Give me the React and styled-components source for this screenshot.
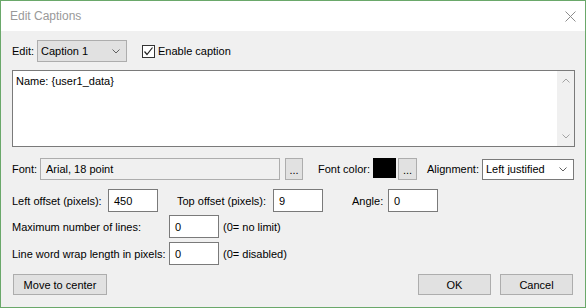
import React from 'react';
import styled, { createGlobalStyle } from 'styled-components';

const GlobalStyle = createGlobalStyle`
  html, body {
    margin: 0;
    padding: 0;
    background: #ffffff;
  }
  body {
    font-family: "Liberation Sans", Arial, sans-serif;
    font-size: 11px;
    color: #000000;
  }
`;

const SWindow = styled.div`
  box-sizing: border-box;
  width: 586px;
  height: 308px;
  border: 1px solid #6aa86a;
  background: #f0f0f0;
  display: flex;
  flex-direction: column;
`;

const STitleBar = styled.div`
  height: 30px;
  background: #ffffff;
  display: flex;
  align-items: center;
  justify-content: space-between;
  padding: 0 9px 0 9px;
  flex-shrink: 0;
`;

const STitle = styled.span`
  font-size: 12px;
  color: #999999;
  margin-top: -1px;
`;

const SBody = styled.div`
  flex: 1;
  display: flex;
  flex-direction: column;
  padding: 9px 10px 0 11px;
`;

const SRow = styled.div`
  display: flex;
  align-items: center;
  height: ${props => props.$h || 22}px;
  margin-top: ${props => props.$mt || 0}px;
`;

const SLabel = styled.span`
  display: inline-block;
  white-space: nowrap;
  width: ${props => (props.$w ? `${props.$w}px` : 'auto')};
  margin-left: ${props => props.$ml || 0}px;
  flex-shrink: 0;
`;

const SCombo = styled.div`
  box-sizing: border-box;
  width: ${props => props.$w}px;
  height: ${props => props.$h || 22}px;
  border: 1px solid ${props => (props.$light ? '#7a7a7a' : '#adadad')};
  background: ${props => (props.$light ? '#ffffff' : '#e1e1e1')};
  display: flex;
  align-items: center;
  justify-content: space-between;
  padding: 0 6px 0 3px;
  margin-left: ${props => props.$ml || 0}px;
  flex-shrink: 0;
`;

const SCheckWrap = styled.label`
  display: flex;
  align-items: center;
  margin-left: 15px;
  gap: 3px;
`;

const SCheckBox = styled.span`
  box-sizing: border-box;
  width: 13px;
  height: 13px;
  border: 1px solid #333333;
  background: #ffffff;
  display: flex;
  align-items: center;
  justify-content: center;
`;

const STextArea = styled.div`
  box-sizing: border-box;
  height: 77px;
  margin-top: 8px;
  border: 1px solid #7a7a7a;
  background: #ffffff;
  display: flex;
`;

const STextContent = styled.div`
  flex: 1;
  padding: 4px 3px;
`;

const SScrollBar = styled.div`
  width: 17px;
  background: #f0f0f0;
  display: flex;
  flex-direction: column;
  justify-content: space-between;
  align-items: center;
  padding: 7px 0;
`;

const SReadonlyBox = styled.div`
  box-sizing: border-box;
  width: 240px;
  height: 22px;
  border: 1px solid #adadad;
  background: #f0f0f0;
  display: flex;
  align-items: center;
  padding-left: 5px;
  flex-shrink: 0;
`;

const SSmallButton = styled.div`
  box-sizing: border-box;
  width: ${props => props.$w || 18}px;
  height: 22px;
  margin-left: ${props => props.$ml || 0}px;
  border: 1px solid #adadad;
  background: #e1e1e1;
  display: flex;
  align-items: flex-end;
  justify-content: center;
  padding-bottom: 3px;
  line-height: 1;
  flex-shrink: 0;
`;

const SSwatch = styled.div`
  width: 23px;
  height: 20px;
  background: #000000;
  align-self: flex-start;
  flex-shrink: 0;
`;

const SInput = styled.div`
  box-sizing: border-box;
  width: 50px;
  height: 23px;
  border: 1px solid #7a7a7a;
  background: #ffffff;
  display: flex;
  align-items: center;
  padding-left: 5px;
  flex-shrink: 0;
`;

const SHint = styled.span`
  margin-left: 4px;
  white-space: nowrap;
`;

const SFooter = styled.div`
  display: flex;
  align-items: center;
  justify-content: space-between;
  margin-top: 9px;
  padding: 0 2px 0 1px;
`;

const SButton = styled.div`
  box-sizing: border-box;
  width: ${props => props.$w}px;
  height: 21px;
  border: 1px solid #adadad;
  background: #e1e1e1;
  display: flex;
  align-items: center;
  justify-content: center;
`;

const SButtonGroup = styled.div`
  display: flex;
  gap: 9px;
`;

const Chevron = ({ up, color = '#606060' }) => (
  <svg width="8" height="5" viewBox="0 0 8 5">
    <polyline
      points={up ? '0.5,4.5 4,1 7.5,4.5' : '0.5,0.5 4,4 7.5,0.5'}
      fill="none"
      stroke={color}
      strokeWidth="1"
    />
  </svg>
);

const CloseIcon = () => (
  <svg width="11" height="11" viewBox="0 0 11 11">
    <path d="M0.5 0.5 L10.5 10.5 M10.5 0.5 L0.5 10.5" stroke="#8c8c8c" strokeWidth="1" />
  </svg>
);

const CheckMark = () => (
  <svg width="11" height="11" viewBox="0 0 11 11">
    <polyline points="1.5,5.5 4,8.5 9.5,1.5" fill="none" stroke="#222222" strokeWidth="1.2" />
  </svg>
);

const App = () => {
  return (
    <>
      <GlobalStyle />
      <SWindow>
        <STitleBar>
          <STitle>Edit Captions</STitle>
          <CloseIcon />
        </STitleBar>
        <SBody>
          <SRow $h={22}>
            <SLabel $w={25}>Edit:</SLabel>
            <SCombo $w={90}>
              <span>Caption 1</span>
              <Chevron />
            </SCombo>
            <SCheckWrap>
              <SCheckBox>
                <CheckMark />
              </SCheckBox>
              <span>Enable caption</span>
            </SCheckWrap>
          </SRow>

          <STextArea>
            <STextContent>Name: {'{user1_data}'}</STextContent>
            <SScrollBar>
              <Chevron up color="#a3a3a3" />
              <Chevron color="#a3a3a3" />
            </SScrollBar>
          </STextArea>

          <SRow $h={22} $mt={11}>
            <SLabel $w={28}>Font:</SLabel>
            <SReadonlyBox>Arial, 18 point</SReadonlyBox>
            <SSmallButton $ml={5}>...</SSmallButton>
            <SLabel $w={55} $ml={15}>Font color:</SLabel>
            <SSwatch />
            <SSmallButton $ml={2} $w={19}>...</SSmallButton>
            <SLabel $w={55} $ml={10}>Alignment:</SLabel>
            <SCombo $w={92} $h={21} $light>
              <span>Left justified</span>
              <Chevron />
            </SCombo>
          </SRow>

          <SRow $h={23} $mt={9}>
            <SLabel $w={96}>Left offset (pixels):</SLabel>
            <SInput>450</SInput>
            <SLabel $w={96} $ml={19}>Top offset (pixels):</SLabel>
            <SInput>9</SInput>
            <SLabel $w={36} $ml={29}>Angle:</SLabel>
            <SInput>0</SInput>
          </SRow>

          <SRow $h={23} $mt={3}>
            <SLabel $w={157}>Maximum number of lines:</SLabel>
            <SInput>0</SInput>
            <SHint>(0= no limit)</SHint>
          </SRow>

          <SRow $h={23} $mt={4}>
            <SLabel $w={157}>Line word wrap length in pixels:</SLabel>
            <SInput>0</SInput>
            <SHint>(0= disabled)</SHint>
          </SRow>

          <SFooter>
            <SButton $w={94}>Move to center</SButton>
            <SButtonGroup>
              <SButton $w={73}>OK</SButton>
              <SButton $w={73}>Cancel</SButton>
            </SButtonGroup>
          </SFooter>
        </SBody>
      </SWindow>
    </>
  );
};

export default App;
